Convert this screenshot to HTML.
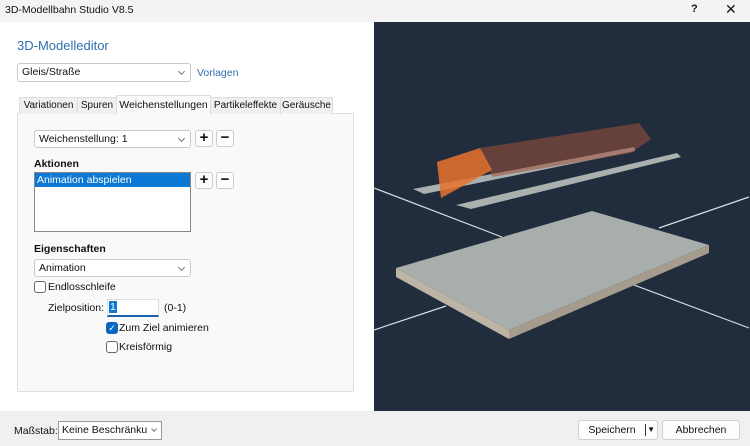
<!DOCTYPE html>
<html><head><meta charset="utf-8"><style>
*{box-sizing:border-box;margin:0;padding:0}
body{width:750px;height:446px;overflow:hidden;background:#fff;font-family:"Liberation Sans",sans-serif;font-size:10.5px;color:#111;position:relative}
.a{position:absolute;white-space:nowrap}
.combo{position:absolute;background:#fff;border:1px solid #c9c9c9;border-radius:3px;padding:2px 4px;line-height:13px}
.combo:after{content:"";position:absolute;right:6px;top:5px;width:4px;height:4px;border-right:1px solid #777;border-bottom:1px solid #777;transform:rotate(45deg)}
.btn{position:absolute;width:18px;height:17px;border:1px solid #ccc;border-radius:3px;background:#fdfdfd;font-weight:bold;font-size:15px;line-height:14px;text-align:center}
.tab{position:absolute;top:97px;height:17px;border:1px solid #ddd;border-bottom:none;background:#f0f0f0;padding:1px 0;line-height:14px;text-align:center;white-space:nowrap;font-size:10px}
.cb{position:absolute;width:12px;height:12px;border:1px solid #666;border-radius:3px;background:#fff}
.pb{position:absolute;height:20px;border:1px solid #d0d0d0;border-radius:3px;background:#fdfdfd;text-align:center;line-height:18px}
</style></head><body>
<div class="a" style="left:0;top:0;width:750px;height:22px;background:#f3f3f3"></div>
<div class="a" style="left:5px;top:4px;font-size:10.5px">3D-Modellbahn Studio V8.5</div>
<div class="a" style="left:691px;top:3px;font-weight:bold;font-size:11px">?</div>
<div class="a" style="left:725px;top:1px;font-size:14px">✕</div>
<div class="a" style="left:17px;top:38px;font-size:13px;color:#2f6fad">3D-Modelleditor</div>
<div class="combo" style="left:17px;top:63px;width:174px;height:19px">Gleis/Straße</div>
<div class="a" style="left:197px;top:67px;color:#2f6fad">Vorlagen</div>
<div class="a" style="left:17px;top:113px;width:337px;height:279px;background:#f9f9f9;border:1px solid #e0e0e0"></div>
<div class="tab" style="left:19px;width:59px">Variationen</div>
<div class="tab" style="left:77px;width:40px">Spuren</div>
<div class="tab" style="left:116px;top:95px;height:19px;width:95px;background:#f9f9f9;padding-top:2px;font-size:10.5px">Weichenstellungen</div>
<div class="tab" style="left:210px;width:71px">Partikeleffekte</div>
<div class="tab" style="left:280px;width:53px">Geräusche</div>
<div class="combo" style="left:34px;top:130px;width:157px;height:18px">Weichenstellung: 1</div>
<div class="btn" style="left:195px;top:130px">+</div><div class="btn" style="left:216px;top:130px">−</div>
<div class="a" style="left:34px;top:158px;font-weight:bold">Aktionen</div>
<div class="a" style="left:34px;top:172px;width:157px;height:60px;border:1px solid #888;background:#fff"><div style="background:#0a78d4;color:#fff;height:14px;line-height:14px;padding-left:2px">Animation abspielen</div></div>
<div class="btn" style="left:195px;top:172px">+</div><div class="btn" style="left:216px;top:172px">−</div>
<div class="a" style="left:34px;top:243px;font-weight:bold">Eigenschaften</div>
<div class="combo" style="left:34px;top:259px;width:157px;height:18px">Animation</div>
<div class="cb" style="left:34px;top:281px"></div><div class="a" style="left:48px;top:281px">Endlosschleife</div>
<div class="a" style="left:48px;top:302px">Zielposition:</div>
<div class="a" style="left:107px;top:299px;width:52px;height:18px;background:#fff;border:1px solid #ddd;border-bottom:2px solid #1a5fb4;line-height:15px"><span style="background:#0a78d4;color:#fff;margin-left:1px;padding:0 1px">1</span></div>
<div class="a" style="left:164px;top:302px">(0-1)</div>
<div class="cb" style="left:106px;top:322px;background:#0a67c0;border-color:#0a67c0;color:#fff;font-size:9px;line-height:10px;text-align:center">✓</div><div class="a" style="left:119px;top:322px">Zum Ziel animieren</div>
<div class="cb" style="left:106px;top:341px"></div><div class="a" style="left:119px;top:341px">Kreisförmig</div>
<div class="a" style="left:374px;top:22px;width:376px;height:389px;background:#212d3c">
<svg width="376" height="389" viewBox="375 22 376 389">
<g stroke="#d8dde0" stroke-width="1.2" fill="none">
<line x1="375" y1="188" x2="503" y2="237"/><line x1="635" y1="285" x2="750" y2="328"/>
<line x1="375" y1="330" x2="447" y2="306"/><line x1="660" y1="228" x2="750" y2="197"/>
</g>
<polygon points="414,189 635,147 636,151 425,194" fill="#a9b0ae"/>
<polygon points="457,205 678,153 682,157 472,209" fill="#a9b0ae"/>
<polygon points="481,148 640,123 652,139 632,153 493,177" fill="#a0503a" fill-opacity="0.55"/>
<polygon points="438,162 481,148 493,170 442,198" fill="#e8732d" fill-opacity="0.85"/>
<polygon points="397,268 593,211 710,245 510,330" fill="#a7aeac"/>
<polygon points="397,268 510,330 510,339 397,277" fill="#bdb4a6"/>
<polygon points="510,330 710,245 710,253 510,339" fill="#a59c8e"/>
</svg></div>
<div class="a" style="left:0;top:411px;width:750px;height:35px;background:#f0f0f0"></div>
<div class="a" style="left:14px;top:425px">Maßstab:</div>
<div class="a" style="left:58px;top:421px;width:104px;height:19px;background:#fff;border:1px solid #999;padding:2px 3px;line-height:13px;overflow:hidden">Keine Beschränkung<span style="position:absolute;right:0;top:0;width:14px;height:17px;background:#fff"></span><span style="position:absolute;right:5px;top:5px;width:4px;height:4px;border-right:1px solid #777;border-bottom:1px solid #777;transform:rotate(45deg)"></span></div>
<div class="pb" style="left:578px;top:420px;width:80px;padding-right:12px">Speichern<span style="position:absolute;right:11px;top:3px;height:12px;border-left:1px solid #333"></span><span style="position:absolute;right:2px;top:0;font-size:8px">▼</span></div>
<div class="pb" style="left:662px;top:420px;width:78px">Abbrechen</div>
</body></html>
